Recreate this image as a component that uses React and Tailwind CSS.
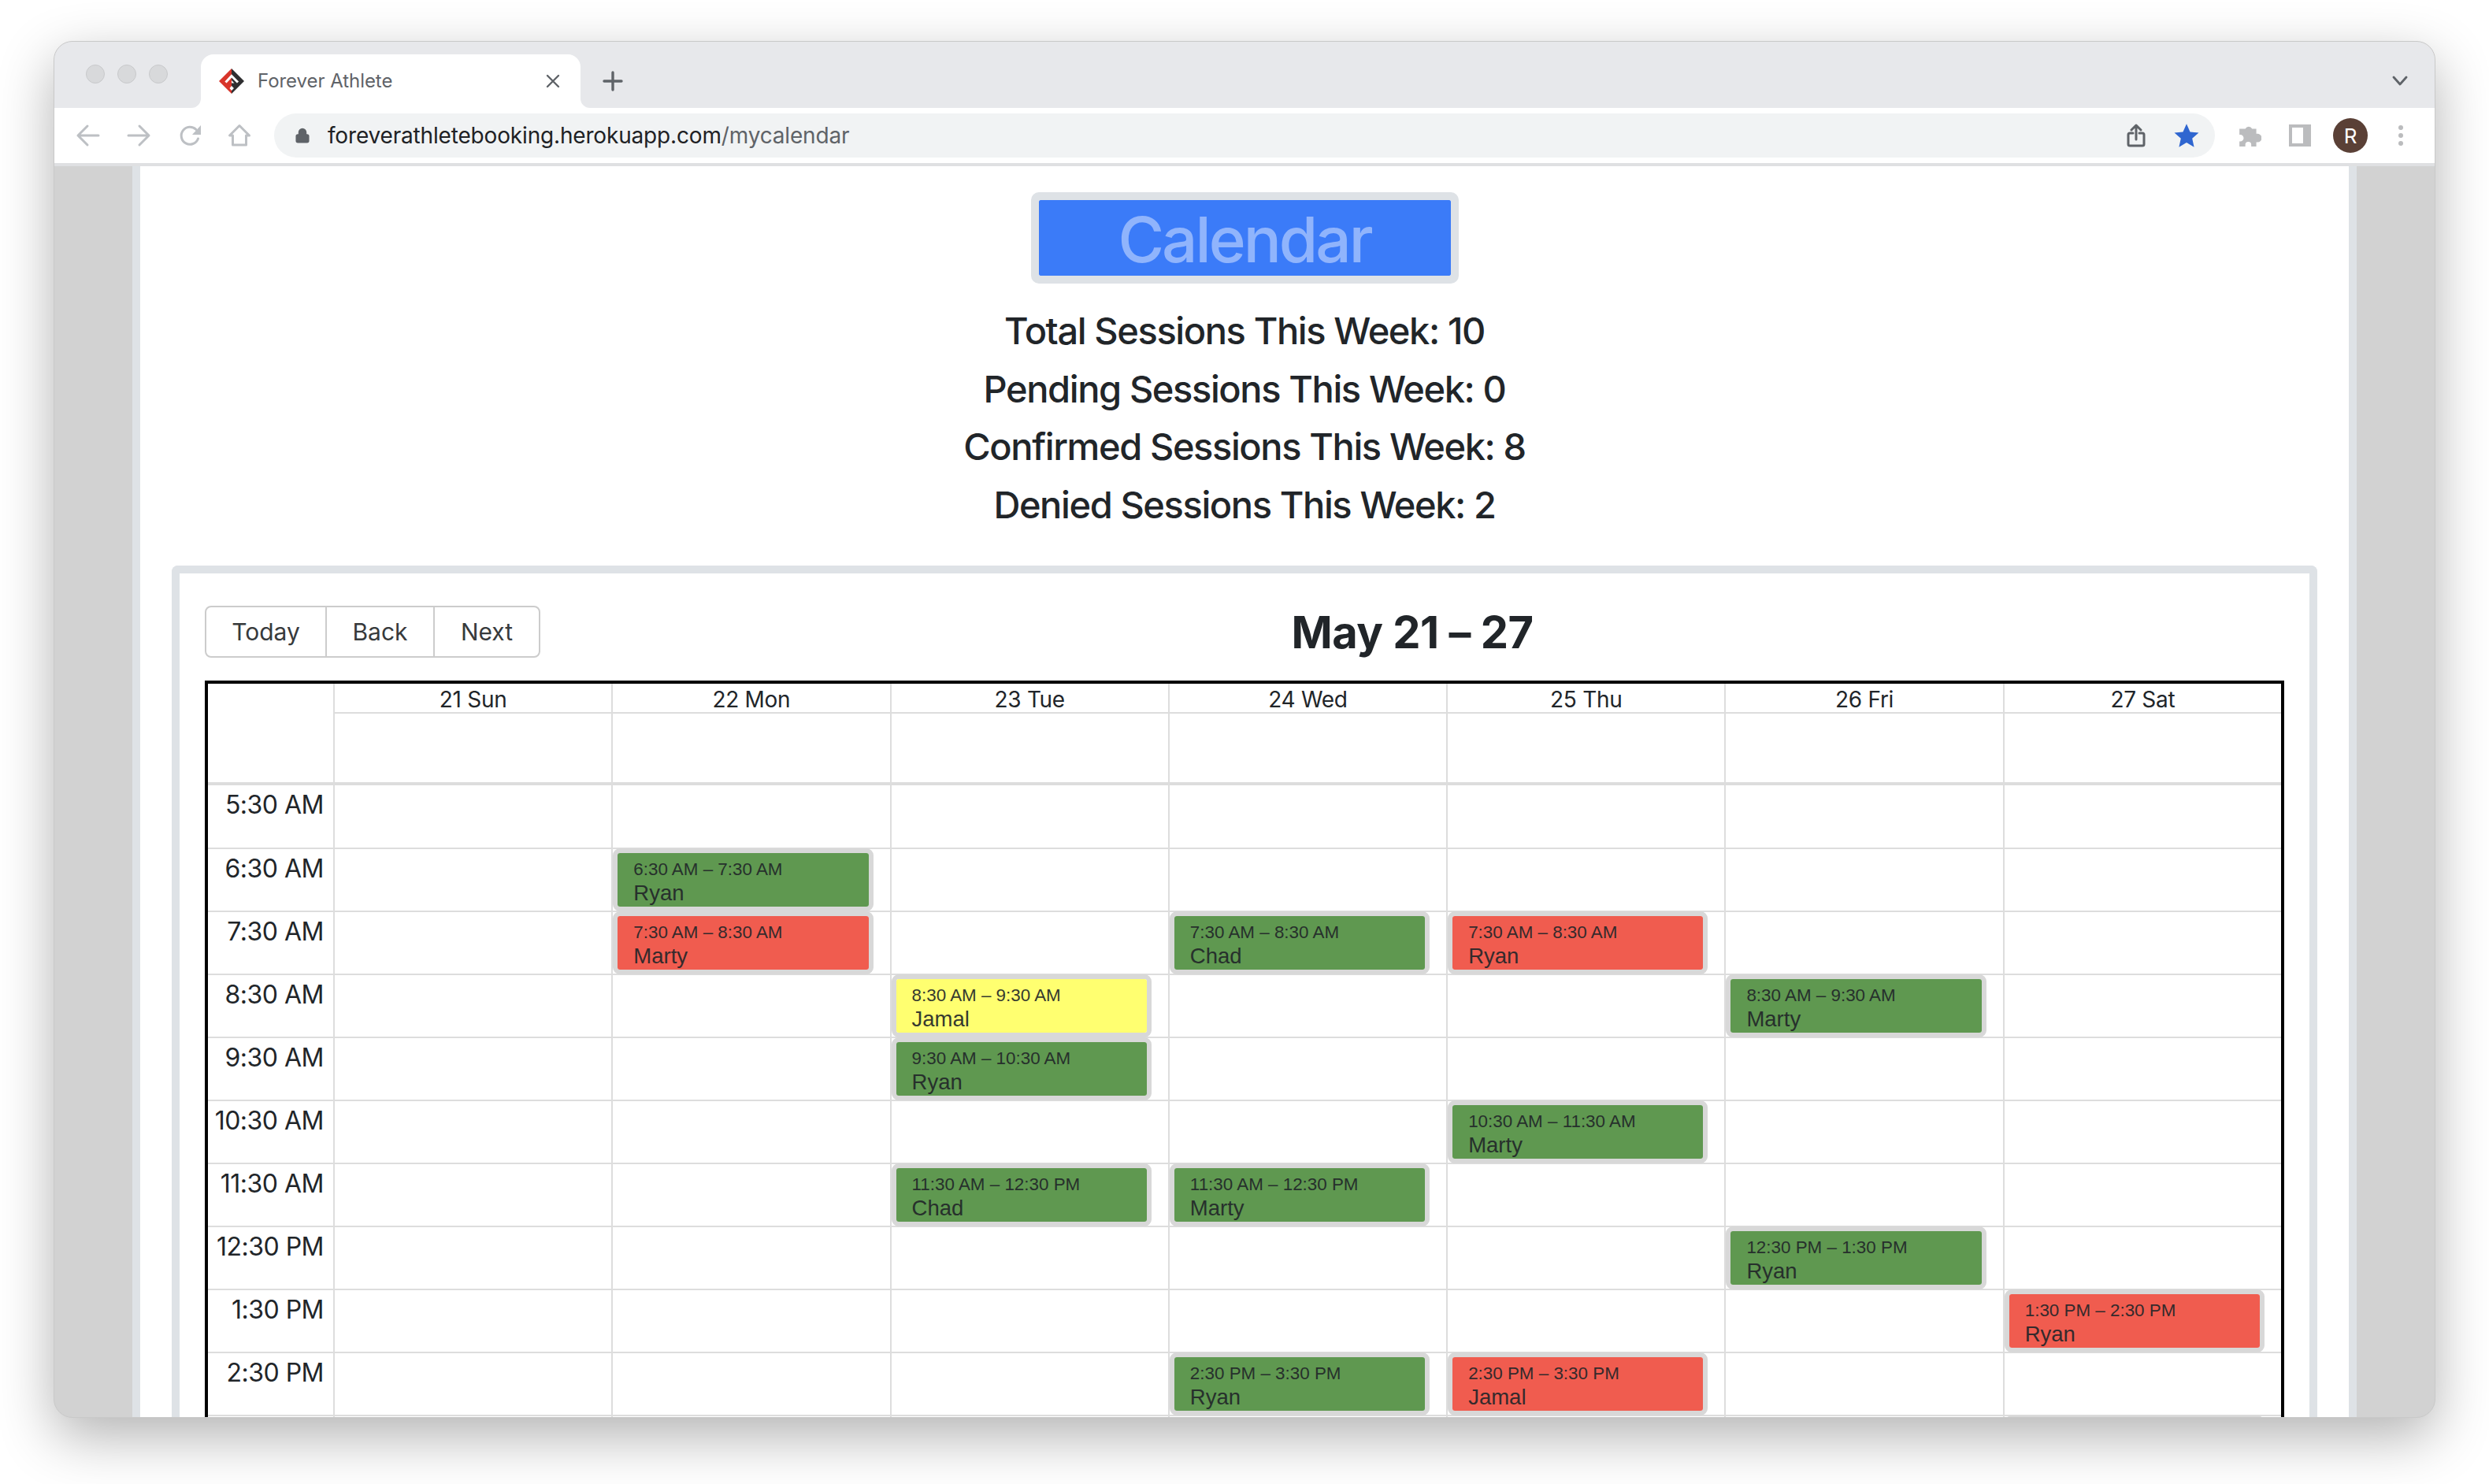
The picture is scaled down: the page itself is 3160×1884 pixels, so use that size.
import { Lock } from "lucide-react";

const sans = "font-['Inter','Liberation_Sans',sans-serif]";
const helv = "font-['Liberation_Sans',Arial,sans-serif]";

const eventColors = {
  green: "bg-[#5f9850]",
  red: "bg-[#f05c4f]",
  yellow: "bg-[#ffff70]",
};

const days = ["21 Sun", "22 Mon", "23 Tue", "24 Wed", "25 Thu", "26 Fri", "27 Sat"];

const rows = [
  { time: "5:30 AM", events: {} },
  { time: "6:30 AM", events: { 1: { color: "green", range: "6:30 AM – 7:30 AM", name: "Ryan" } } },
  {
    time: "7:30 AM",
    events: {
      1: { color: "red", range: "7:30 AM – 8:30 AM", name: "Marty" },
      3: { color: "green", range: "7:30 AM – 8:30 AM", name: "Chad" },
      4: { color: "red", range: "7:30 AM – 8:30 AM", name: "Ryan" },
    },
  },
  {
    time: "8:30 AM",
    events: {
      2: { color: "yellow", range: "8:30 AM – 9:30 AM", name: "Jamal" },
      5: { color: "green", range: "8:30 AM – 9:30 AM", name: "Marty" },
    },
  },
  { time: "9:30 AM", events: { 2: { color: "green", range: "9:30 AM – 10:30 AM", name: "Ryan" } } },
  { time: "10:30 AM", events: { 4: { color: "green", range: "10:30 AM – 11:30 AM", name: "Marty" } } },
  {
    time: "11:30 AM",
    events: {
      2: { color: "green", range: "11:30 AM – 12:30 PM", name: "Chad" },
      3: { color: "green", range: "11:30 AM – 12:30 PM", name: "Marty" },
    },
  },
  { time: "12:30 PM", events: { 5: { color: "green", range: "12:30 PM – 1:30 PM", name: "Ryan" } } },
  { time: "1:30 PM", events: { 6: { color: "red", range: "1:30 PM – 2:30 PM", name: "Ryan" } } },
  {
    time: "2:30 PM",
    events: {
      3: { color: "green", range: "2:30 PM – 3:30 PM", name: "Ryan" },
      4: { color: "red", range: "2:30 PM – 3:30 PM", name: "Jamal" },
    },
  },
  { time: "", events: { 6: { color: "red", range: "", name: "" } } },
];

function Favicon() {
  return (
    <svg width="34" height="34" viewBox="0 0 34 34">
      <path d="M17 1 L17 33 L1 17 Z" fill="#d8352a" />
      <path d="M17 1 L33 17 L17 33 Z" fill="#2f2f31" />
      <path d="M9.5 18.5 L17 10.5 L25 18.5" fill="none" stroke="#ffffff" strokeWidth="3" />
      <path d="M17 16 L20.5 19.5 H17 V23 L20 26 L17 29 L14.5 26 L17 23 Z" fill="#ffffff" />
    </svg>
  );
}

function NavIcon({ children }) {
  return (
    <svg width="32" height="32" viewBox="0 0 32 32" fill="none" stroke="#bdc0c4" strokeWidth="3" strokeLinecap="round" strokeLinejoin="round">
      {children}
    </svg>
  );
}

function TabBar() {
  return (
    <div className="flex h-[84px] shrink-0 items-end bg-[#e7e8eb]">
      <div className="ml-[40px] flex h-[24px] w-[104px] gap-[16px] self-center -mt-[2px]">
        <span className="size-[24px] rounded-full border border-[#c8c9cb] bg-[#d8d9db]" />
        <span className="size-[24px] rounded-full border border-[#c8c9cb] bg-[#d8d9db]" />
        <span className="size-[24px] rounded-full border border-[#c8c9cb] bg-[#d8d9db]" />
      </div>
      <div className="relative ml-[42px] flex h-[68px] w-[482px] items-center rounded-t-[16px] bg-white pl-[22px] pr-[26px]">
        <span className="absolute -left-[12px] bottom-0 size-[12px] bg-white">
          <span className="block size-[12px] rounded-br-[12px] bg-[#e7e8eb]" />
        </span>
        <span className="absolute -right-[12px] bottom-0 size-[12px] bg-white">
          <span className="block size-[12px] rounded-bl-[12px] bg-[#e7e8eb]" />
        </span>
        <Favicon />
        <span className={`ml-[16px] flex-1 text-[24px] tracking-[-0.05px] text-[#5f6368] ${sans}`}>Forever Athlete</span>
        <svg width="18" height="18" viewBox="0 0 18 18" stroke="#5f6368" strokeWidth="2.4" strokeLinecap="round">
          <path d="M2 2 L16 16 M16 2 L2 16" />
        </svg>
      </div>
      <div className="ml-[28px] flex h-[68px] items-center">
        <svg width="26" height="26" viewBox="0 0 26 26" stroke="#5f6368" strokeWidth="3.4" strokeLinecap="round">
          <path d="M13 2 V24 M2 13 H24" />
        </svg>
      </div>
      <div className="ml-auto mr-[34px] flex h-[68px] items-center">
        <svg width="20" height="14" viewBox="0 0 20 14" fill="none" stroke="#5f6368" strokeWidth="2.8" strokeLinecap="round" strokeLinejoin="round">
          <path d="M2 2 L10 11 L18 2" />
        </svg>
      </div>
    </div>
  );
}

function AddressBar() {
  return (
    <div className="flex h-[74px] shrink-0 items-center border-b-[4px] border-[#dfe0e2] bg-white">
      <div className="ml-[27px] flex w-[252px] items-center gap-[32px]">
        <NavIcon><path d="M29 16 H3 M15 4 L3 16 L15 28" /></NavIcon>
        <NavIcon><path d="M3 16 H29 M17 4 L29 16 L17 28" /></NavIcon>
        <NavIcon>
          <path d="M25 8.5 A11 11 0 1 0 27.5 20" />
          <path d="M31 3 V15 H20 Z" fill="#bdc0c4" stroke="none" />
        </NavIcon>
        <NavIcon><path d="M16 3.5 L3.5 16 H7.5 V28 H24.5 V16 H28.5 Z" /></NavIcon>
      </div>
      <div className="flex h-[56px] w-[2464px] items-center rounded-full bg-[#f1f3f4] pl-[26px] pr-[20px]">
        <Lock size={20} className="text-[#5f6368]" fill="#5f6368" strokeWidth={2.5} />
        <span className={`ml-[22px] flex-1 text-[28px] tracking-[-0.17px] text-[#202124] ${sans}`}>
          foreverathletebooking.herokuapp.com<span className="text-[#5f6368]">/mycalendar</span>
        </span>
        <svg width="24" height="30" viewBox="0 0 24 30" fill="none" stroke="#5f6368" strokeWidth="3" strokeLinecap="round" strokeLinejoin="round">
          <path d="M8 12 H4 Q2 12 2 14 V26 Q2 28 4 28 H20 Q22 28 22 26 V14 Q22 12 20 12 H16 M12 20 V2 M6 8 L12 2 L18 8" />
        </svg>
        <svg className="ml-[36px]" width="32" height="32" viewBox="0 0 24 24" fill="#2f66d0">
          <path d="M12 1 L15.4 8.6 L23.6 9.4 L17.4 14.9 L19.2 23 L12 18.8 L4.8 23 L6.6 14.9 L0.4 9.4 L8.6 8.6 Z" />
        </svg>
      </div>
      <svg className="ml-[29px]" width="30" height="30" viewBox="0 0 28 28" fill="#bbbcbe">
        <path d="M5 6 H9 A4.5 4.5 0 0 1 17 6 H22 V12 H23.5 A4.5 4.5 0 0 1 23.5 22 H22 V27 H16 V25 A3.5 3.5 0 0 0 9 25 V27 H2 V21 H3 A4 4 0 0 0 3 13 H2 V6 Z" />
      </svg>
      <div className="ml-[35px] size-[28px] border-[4px] border-r-[10px] border-[#bbbcbe] bg-white" />
      <div className={`ml-[28px] flex size-[44px] items-center justify-center rounded-full bg-[#5a4036] text-[26px] text-white ${sans}`}>R</div>
      <div className="ml-[39px] flex flex-col gap-[4px]">
        <span className="size-[6px] rounded-full bg-[#bbbcbe]" />
        <span className="size-[6px] rounded-full bg-[#bbbcbe]" />
        <span className="size-[6px] rounded-full bg-[#bbbcbe]" />
      </div>
    </div>
  );
}

function EventCard({ event }) {
  return (
    <div className="-mt-[1px] h-[80px] rounded-[9px] border-[6px] border-[#d8d8d8]">
      <div className={`h-full rounded-[3px] px-[20px] pt-[8px] text-[#212529] ${eventColors[event.color]} ${helv}`}>
        <div className="text-[22.4px] leading-[26px] opacity-90">{event.range}</div>
        <div className="text-[27.5px] leading-[33px] opacity-90">{event.name}</div>
      </div>
    </div>
  );
}

function WeekGrid() {
  return (
    <div className={`flex-1 border-x-[4px] border-t-[4px] border-black text-[#212529] ${sans}`}>
      <div className="grid grid-cols-[159px_repeat(7,1fr)]">
        <div className="row-span-2" />
        {days.map((d) => (
          <div key={d} className="h-[38px] border-b-[2px] border-l-[2px] border-[#dddddd] pt-[1px] text-center text-[28px] leading-[38px] tracking-[-0.3px]">
            {d}
          </div>
        ))}
        {days.map((d) => (
          <div key={d} className="h-[87px] border-l-[2px] border-[#dddddd]" />
        ))}
      </div>
      {rows.map((row, i) => (
        <div
          key={i}
          className={`grid grid-cols-[159px_repeat(7,1fr)] border-[#dddddd] ${i === 0 ? "h-[83px] border-t-[4px]" : "h-[80px] border-t-[2px]"}`}
        >
          <div className="pr-[12px] pt-[6px] text-right text-[32px] leading-[38px] tracking-[-0.5px]">{row.time}</div>
          {days.map((d, col) => (
            <div key={d} className="border-l-[2px] border-[#dddddd] pr-[21px]">
              {row.events[col] && <EventCard event={row.events[col]} />}
            </div>
          ))}
        </div>
      ))}
    </div>
  );
}

function CalendarCard() {
  return (
    <div className="mx-[40px] mt-[41px] flex flex-col rounded-t-[8px] border-x-[10px] border-t-[10px] border-[#dee2e6] px-[32px]">
      <div className="flex h-[136px] items-center pb-[10px] pt-[22px]">
        <div className={`flex h-[66px] w-[426px] rounded-[8px] border-[2px] border-[#cccccc] text-[30px] text-[#373a3c] ${sans}`}>
          <span className="flex w-[153px] items-center justify-center border-r-[2px] border-[#cccccc]">Today</span>
          <span className="flex w-[137px] items-center justify-center border-r-[2px] border-[#cccccc]">Back</span>
          <span className="flex flex-1 items-center justify-center">Next</span>
        </div>
        <div className={`flex-1 pt-[2px] text-center text-[56px] font-bold leading-none tracking-[-0.5px] text-[#212529] ${sans}`}>May 21 – 27</div>
      </div>
      <div className="flex">
        <WeekGrid />
      </div>
    </div>
  );
}

export default function App() {
  return (
    <div className="h-[1884px] w-[3160px] overflow-hidden bg-white pl-[68px] pt-[52px]">
      <div className="flex h-[1748px] w-[3024px] flex-col overflow-hidden rounded-[24px] border border-[#c9c9c9] bg-[#d2d2d2] shadow-[0_24px_70px_rgba(0,0,0,0.3)]">
        <TabBar />
        <AddressBar />
        <div className="mx-[99px] flex-1 overflow-hidden border-x-[10px] border-[#dee2e6] bg-white">
          <div className="flex flex-col items-center pt-[33px]">
            <div className="flex h-[116px] w-[543px] items-center justify-center rounded-[10px] border-[10px] border-[#dee2e6]">
              <div className={`flex h-full w-full items-center justify-center rounded-[2px] bg-[#3b7bf8] pt-[4px] text-[80px] font-medium tracking-[-3px] text-[#90b4fc] ${sans}`}>Calendar</div>
            </div>
            <div className={`mt-[23px] flex flex-col items-center text-[47px] font-[520] leading-[73.5px] tracking-[-1.4px] text-[#212529] ${sans}`}>
              <div>Total Sessions This Week: 10</div>
              <div>Pending Sessions This Week: 0</div>
              <div>Confirmed Sessions This Week: 8</div>
              <div>Denied Sessions This Week: 2</div>
            </div>
          </div>
          <CalendarCard />
        </div>
      </div>
    </div>
  );
}
